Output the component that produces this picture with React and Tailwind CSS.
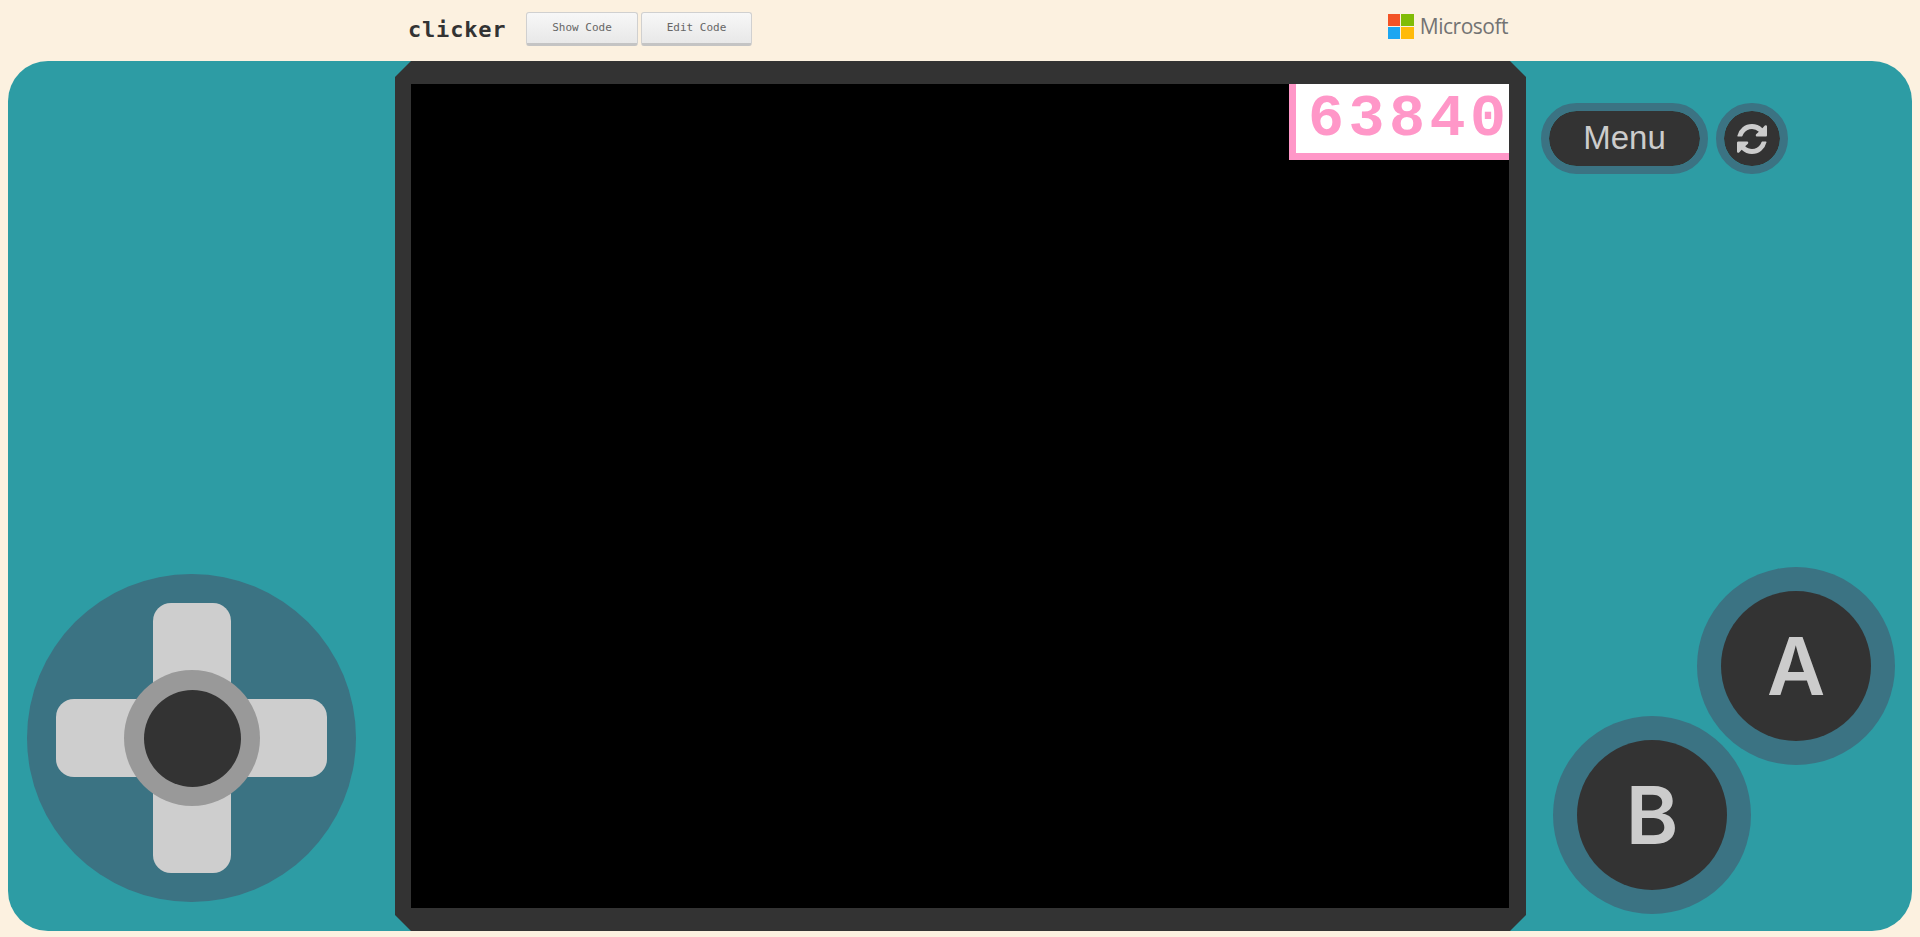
import React from 'react';

const ShellButton = ({ children, className }) => (
    <button className={`flex items-center justify-center border-8 border-[#3b7383] bg-[#333333] bg-clip-padding text-[#cccccc] ${className}`}>
        {children}
    </button>
);

const CodeButton = ({ label, width }) => (
    <button className={`${width} h-[34px] rounded-[3px] border border-[#d0d0d0] border-b-[3px] border-b-[#c4c4c4] bg-gradient-to-b from-[#f7f7f7] to-[#e8e8e8] font-['DejaVu_Sans_Mono',monospace] text-[11px] text-[#666666]`}>
        {label}
    </button>
);

const MicrosoftLogo = () => (
    <div className="ml-auto mr-[412px] flex items-center gap-[6px]">
        <div className="grid h-[25px] w-[26px] grid-cols-2 gap-[1px]">
            <div className="bg-[#f35325]" />
            <div className="bg-[#81bc06]" />
            <div className="bg-[#1ba6f1]" />
            <div className="bg-[#ffba08]" />
        </div>
        <span className="font-['Open_Sans',sans-serif] text-[21px] font-medium leading-none tracking-[-0.5px] text-[#737373]">Microsoft</span>
    </div>
);

const Dpad = () => (
    <div className="relative h-[328px] w-[329px] rounded-full bg-[#3b7383]">
        <div className="absolute left-[126px] top-[29px] h-[270px] w-[78px] rounded-[18px] bg-[#cecece]" />
        <div className="absolute left-[29px] top-[125px] h-[78px] w-[271px] rounded-[18px] bg-[#cecece]" />
        <div className="absolute left-[97px] top-[96px] flex h-[136px] w-[136px] items-center justify-center rounded-full bg-[#999999]">
            <div className="h-[97px] w-[97px] rounded-full bg-[#333333]" />
        </div>
    </div>
);

const RoundButton = ({ label, className }) => (
    <button className={`flex h-[198px] w-[198px] items-center justify-center rounded-full bg-[#3b7383] ${className}`}>
        <span className="flex h-[150px] w-[150px] items-center justify-center rounded-full bg-[#333333] font-['Inter',sans-serif] text-[80px] font-semibold leading-none text-[#cccccc]">
            {label}
        </span>
    </button>
);

const RefreshIcon = () => (
    <svg viewBox="0 128 1536 1536" className="h-[30px] w-[30px] fill-current">
        <path d="M1511 1056q0 5-1 7-64 268-268 434.5t-478 166.5q-146 0-282.5-55t-243.5-157l-129 129q-19 19-45 19t-45-19-19-45v-448q0-26 19-45t45-19h448q26 0 45 19t19 45-19 45l-137 137q71 66 161 102t187 36q134 0 250-65t186-179q11-17 53-117 8-23 30-23h192q13 0 22.5 9.5t9.5 22.5zm25-800v448q0 26-19 45t-45 19h-448q-26 0-45-19t-19-45 19-45l138-138q-148-137-349-137-134 0-250 65t-186 179q-11 17-53 117-8 23-30 23h-199q-13 0-22.5-9.5t-9.5-22.5v-7q65-268 270-434.5t480-166.5q146 0 284 55.5t245 156.5l130-129q19-19 45-19t45 19 19 45z" />
    </svg>
);

export default function App() {
    return (
        <div className="flex h-[937px] flex-col bg-[#fcf1e0]">
            {/* Top bar */}
            <div className="flex h-[61px] shrink-0 items-start pl-[408px]">
                <span className="mt-[18px] w-[118px] font-['DejaVu_Sans_Mono',monospace] text-[22px] font-bold leading-[24px] tracking-[0.8px] text-[#333333]">clicker</span>
                <div className="mt-[12px] flex gap-[3px]">
                    <CodeButton label="Show Code" width="w-[112px]" />
                    <CodeButton label="Edit Code" width="w-[111px]" />
                </div>
                <div className="mt-[14px] flex flex-1">
                    <MicrosoftLogo />
                </div>
            </div>

            {/* Console */}
            <div className="mx-2 flex h-[870px] rounded-[40px] bg-[#2d9ca4]">
                <div className="flex w-[387px] shrink-0 items-end pb-[29px] pl-[19px]">
                    <Dpad />
                </div>

                <div className="w-[1131px] shrink-0 bg-[#333333] pb-[23px] pl-4 pr-[17px] pt-[23px] [clip-path:polygon(16px_0,calc(100%-16px)_0,100%_16px,100%_calc(100%-16px),calc(100%-16px)_100%,16px_100%,0_calc(100%-16px),0_16px)]">
                    <div className="flex h-[824px] items-start justify-end bg-black">
                        <div className="flex h-[76px] w-[220px] items-center border-b-[7px] border-l-[7px] border-[#ff97c8] bg-white pl-[12px] font-['Liberation_Mono',monospace] text-[60px] font-bold leading-none tracking-[4.5px] text-[#ff97c8]">
                            63840
                        </div>
                    </div>
                </div>

                <div className="flex flex-1 flex-col justify-between pb-[17px] pr-[17px] pl-[27px] pt-[42px]">
                    <div className="-ml-3 flex gap-2">
                        <ShellButton className="h-[71px] w-[167px] rounded-full pb-[2px] font-['Liberation_Sans',sans-serif] text-[33px]">Menu</ShellButton>
                        <ShellButton className="h-[71px] w-[72px] rounded-full">
                            <RefreshIcon />
                        </ShellButton>
                    </div>
                    <div className="flex flex-col">
                        <RoundButton label="A" className="self-end" />
                        <RoundButton label="B" className="-mt-[49px]" />
                    </div>
                </div>
            </div>
        </div>
    );
}
